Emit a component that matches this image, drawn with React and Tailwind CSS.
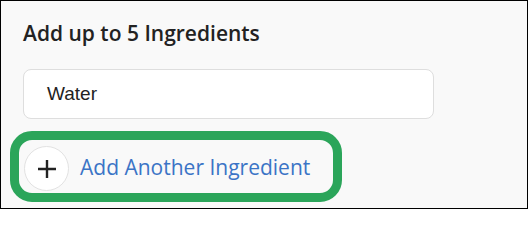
import React from "react";

export default function App() {
  return (
    <div className="w-[528px] h-[209px] border border-black bg-[#f9f9f9] overflow-hidden">
      <div className="pl-[22px] pt-[18px]">
        <h2
          className="text-[21px] leading-[28px] font-semibold text-[#222]"
          style={{ fontFamily: '"Open Sans", sans-serif' }}
        >
          Add up to 5 Ingredients
        </h2>
        <div className="mt-[22px] w-[411px] h-[50px] rounded-lg border border-[#dedede] bg-white flex items-center pl-[23px]">
          <span
            className="text-[19px] text-[#222]"
            style={{ fontFamily: '"Liberation Sans", Arial, sans-serif' }}
          >
            Water
          </span>
        </div>
      </div>
      <div className="ml-[9px] mt-[12px] w-[332px] h-[71px] border-[9px] border-[#2ba55a] rounded-[22px] flex items-center pl-[5px] gap-[11px]">
        <div className="w-[45px] h-[45px] rounded-full border border-[#e2e2e2] bg-white flex items-center justify-center mt-[4px]">
          <svg width="20" height="20" viewBox="0 0 20 20">
            <path d="M10 1v18M1 10h18" stroke="#222" strokeWidth="2.4" />
          </svg>
        </div>
        <span
          className="text-[21px] text-[#3b74c6] mt-[2px]"
          style={{ fontFamily: '"Open Sans", sans-serif' }}
        >
          Add Another Ingredient
        </span>
      </div>
    </div>
  );
}
